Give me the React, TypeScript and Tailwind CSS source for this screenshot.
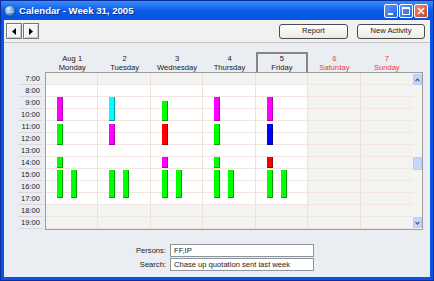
import React from 'react';

type Ev = { lane: 0 | 1; top: number; h: number; color: string };

// bar colours: fill + darker shade on right/bottom edge
const MAG = 'bg-[#ff00ff] border-[#b000b0]';
const CYAN = 'bg-[#00ffff] border-[#00a4a4]';
const GREEN = 'bg-[#00ff00] border-[#00a000]';
const RED = 'bg-[#ff0000] border-[#a00000]';
const BLUE = 'bg-[#0000ff] border-[#00009c]';

const afternoon = (): Ev[] => [
  { lane: 0, top: 97, h: 28, color: GREEN },
  { lane: 1, top: 97, h: 28, color: GREEN },
];

const days = [
  {
    line1: 'Aug 1', line2: 'Monday', weekend: false, today: false,
    events: [
      { lane: 0, top: 24, h: 24, color: MAG },
      { lane: 0, top: 51, h: 21, color: GREEN },
      { lane: 0, top: 84, h: 11, color: GREEN },
      ...afternoon(),
    ] as Ev[],
  },
  {
    line1: '2', line2: 'Tuesday', weekend: false, today: false,
    events: [
      { lane: 0, top: 24, h: 24, color: CYAN },
      { lane: 0, top: 51, h: 21, color: MAG },
      ...afternoon(),
    ] as Ev[],
  },
  {
    line1: '3', line2: 'Wednesday', weekend: false, today: false,
    events: [
      { lane: 0, top: 28, h: 20, color: GREEN },
      { lane: 0, top: 51, h: 21, color: RED },
      { lane: 0, top: 84, h: 11, color: MAG },
      ...afternoon(),
    ] as Ev[],
  },
  {
    line1: '4', line2: 'Thursday', weekend: false, today: false,
    events: [
      { lane: 0, top: 24, h: 24, color: MAG },
      { lane: 0, top: 51, h: 21, color: GREEN },
      { lane: 0, top: 84, h: 11, color: GREEN },
      ...afternoon(),
    ] as Ev[],
  },
  {
    line1: '5', line2: 'Friday', weekend: false, today: true,
    events: [
      { lane: 0, top: 24, h: 24, color: MAG },
      { lane: 0, top: 51, h: 21, color: BLUE },
      { lane: 0, top: 84, h: 11, color: RED },
      ...afternoon(),
    ] as Ev[],
  },
  { line1: '6', line2: 'Saturday', weekend: true, today: false, events: [] as Ev[] },
  { line1: '7', line2: 'Sunday', weekend: true, today: false, events: [] as Ev[] },
];

const hours = [7, 8, 9, 10, 11, 12, 13, 14, 15, 16, 17, 18, 19];

function Globe() {
  return (
    <svg width="12" height="12" viewBox="0 0 12 12">
      <defs>
        <radialGradient id="g" cx="0.35" cy="0.3" r="0.8">
          <stop offset="0" stopColor="#e6f2ff" />
          <stop offset="0.5" stopColor="#6aa6e8" />
          <stop offset="1" stopColor="#1c4c9c" />
        </radialGradient>
      </defs>
      <circle cx="6" cy="6" r="5.5" fill="url(#g)" stroke="#1b3f86" strokeWidth="0.6" />
      <path d="M2.5 7.5 C4 6, 7 8.5, 9.5 6.5" stroke="#ffffff" strokeWidth="0.9" fill="none" opacity="0.8" />
    </svg>
  );
}

function Chevron({ up }: { up: boolean }) {
  return (
    <svg width="5" height="4" viewBox="0 0 5 4">
      <polyline
        points={up ? '0.5,3.2 2.5,1 4.5,3.2' : '0.5,0.8 2.5,3 4.5,0.8'}
        fill="none"
        stroke="#4d6185"
        strokeWidth="1.2"
      />
    </svg>
  );
}

export default function App() {
  return (
    <div className="flex h-[281px] w-[434px] flex-col border border-[#0a2f9c] bg-[#0654e4] font-['Liberation_Sans',Arial,sans-serif] text-[7.6px] text-[#1a1a1a]">
      {/* title bar */}
      <div className="flex h-[19px] items-center bg-linear-to-b from-[#3c8df8] via-[#0b5ce9] to-[#0553e2] pl-[3px] pr-[5px]">
        <Globe />
        <span className="ml-[3px] mt-[1px] text-[9.6px] font-bold text-white [text-shadow:1px_1px_0_#0b2f8f]">
          Calendar - Week 31, 2005
        </span>
        <div className="ml-auto flex gap-[1px]">
          <div className="flex h-[14px] w-[14px] items-end rounded-[2px] border border-white bg-linear-to-br from-[#5f9bfb] to-[#2561e3] pb-[2px] pl-[3px]">
            <div className="h-[2px] w-[5px] bg-white" />
          </div>
          <div className="flex h-[14px] w-[14px] items-center justify-center rounded-[2px] border border-white bg-linear-to-br from-[#5f9bfb] to-[#2561e3]">
            <div className="h-[8px] w-[8px] border border-t-2 border-white" />
          </div>
          <div className="flex h-[14px] w-[14px] items-center justify-center rounded-[2px] border border-white bg-linear-to-br from-[#eb8d6f] to-[#cc3f1c]">
            <svg width="8" height="8" viewBox="0 0 8 8">
              <path d="M1 1 L7 7 M7 1 L1 7" stroke="#ffffff" strokeWidth="1.6" />
            </svg>
          </div>
        </div>
      </div>

      {/* window body */}
      <div className="mx-[3px] mb-[3px] flex flex-1 flex-col bg-[#eaedf1]">
        {/* toolbar */}
        <div className="flex h-[23px] items-center border-b border-[#c4c4c4] bg-[#f1f1f1] pl-[2px] pr-[5px]">
          <div className="flex gap-[1px]">
            <div className="flex h-[16px] w-[16px] items-center justify-center border border-[#777] bg-[#f4f4f4] shadow-[inset_1px_1px_0_#fff,inset_-1px_-1px_0_#c8c8c8]">
              <svg width="4" height="7" viewBox="0 0 4 7">
                <polygon points="4,0 0,3.5 4,7" fill="#000" />
              </svg>
            </div>
            <div className="flex h-[16px] w-[16px] items-center justify-center border border-[#777] bg-[#f4f4f4] shadow-[inset_1px_1px_0_#fff,inset_-1px_-1px_0_#c8c8c8]">
              <svg width="4" height="7" viewBox="0 0 4 7">
                <polygon points="0,0 4,3.5 0,7" fill="#000" />
              </svg>
            </div>
          </div>
          <div className="ml-auto flex gap-[9px]">
            <div className="flex h-[15px] w-[69px] items-center justify-center rounded-[3px] border border-[#4b4b4b] bg-linear-to-b from-white to-[#ebeae4]">
              Report
            </div>
            <div className="flex h-[15px] w-[68px] items-center justify-center rounded-[3px] border border-[#4b4b4b] bg-linear-to-b from-white to-[#ebeae4]">
              New Activity
            </div>
          </div>
        </div>

        {/* day headers */}
        <div className="ml-[42px] mt-[9px] grid h-[20px] w-[367px] grid-cols-7">
          {days.map((d) => (
            <div
              key={d.line2}
              className={`flex flex-col items-center justify-center leading-[9px] ${
                d.today ? 'border-2 border-[#858585]' : ''
              } ${d.weekend ? 'text-[#f03c3c]' : ''}`}
            >
              <span>{d.line1}</span>
              <span>{d.line2}</span>
            </div>
          ))}
        </div>

        {/* time grid */}
        <div className="flex">
          <div className="w-[41px] pt-[1px]">
            {hours.map((h) => (
              <div
                key={h}
                className="ml-[14px] mr-[2px] flex h-[12px] items-center justify-end border-b border-[#d6d9de] pr-[3px] leading-none"
              >
                {h}:00
              </div>
            ))}
          </div>
          <div className="flex border border-[#9c9c9c]">
            <div className="grid w-[367px] grid-cols-7">
              {days.map((d, ci) => (
                <div key={d.line2} className={`relative ${ci < 6 ? 'border-r border-[#f1dfdb]' : ''}`}>
                  {hours.map((h) => {
                    const work = !d.weekend && h >= 8 && h <= 17;
                    return (
                      <div
                        key={h}
                        className={`h-[12px] border-b border-[#f3e5e2] ${work ? 'bg-white' : 'bg-[#f3f3f2]'}`}
                      />
                    );
                  })}
                  {d.events.map((e, i) => (
                    <div
                      key={i}
                      className={`absolute w-[6px] border-r border-b ${e.color}`}
                      style={{ left: e.lane === 0 ? 11 : 25, top: e.top, height: e.h }}
                    />
                  ))}
                </div>
              ))}
            </div>
            {/* scrollbar */}
            <div className="flex w-[9px] flex-col bg-[#f4f5f1] py-[1px]">
              <div className="flex h-[11px] items-center justify-center rounded-[1px] border border-[#b8cbf4] bg-[#c5d5fc]">
                <Chevron up />
              </div>
              <div className="mt-[72px] h-[13px] rounded-[1px] border border-[#b8cbf4] bg-[#c8d7fc]" />
              <div className="mt-auto flex h-[11px] items-center justify-center rounded-[1px] border border-[#b8cbf4] bg-[#c5d5fc]">
                <Chevron up={false} />
              </div>
            </div>
          </div>
        </div>

        {/* filters */}
        <div className="mt-[14px] flex flex-col gap-[1px]">
          <div className="flex items-center gap-[4px]">
            <div className="w-[162px] text-right">Persons:</div>
            <div className="flex h-[13px] w-[144px] items-center border border-[#8e949c] bg-white pl-[3px]">FF,IP</div>
          </div>
          <div className="flex items-center gap-[4px]">
            <div className="w-[162px] text-right">Search:</div>
            <div className="flex h-[13px] w-[144px] items-center border border-[#8e949c] bg-white pl-[3px]">
              Chase up quotation sent last week
            </div>
          </div>
        </div>
      </div>
    </div>
  );
}
